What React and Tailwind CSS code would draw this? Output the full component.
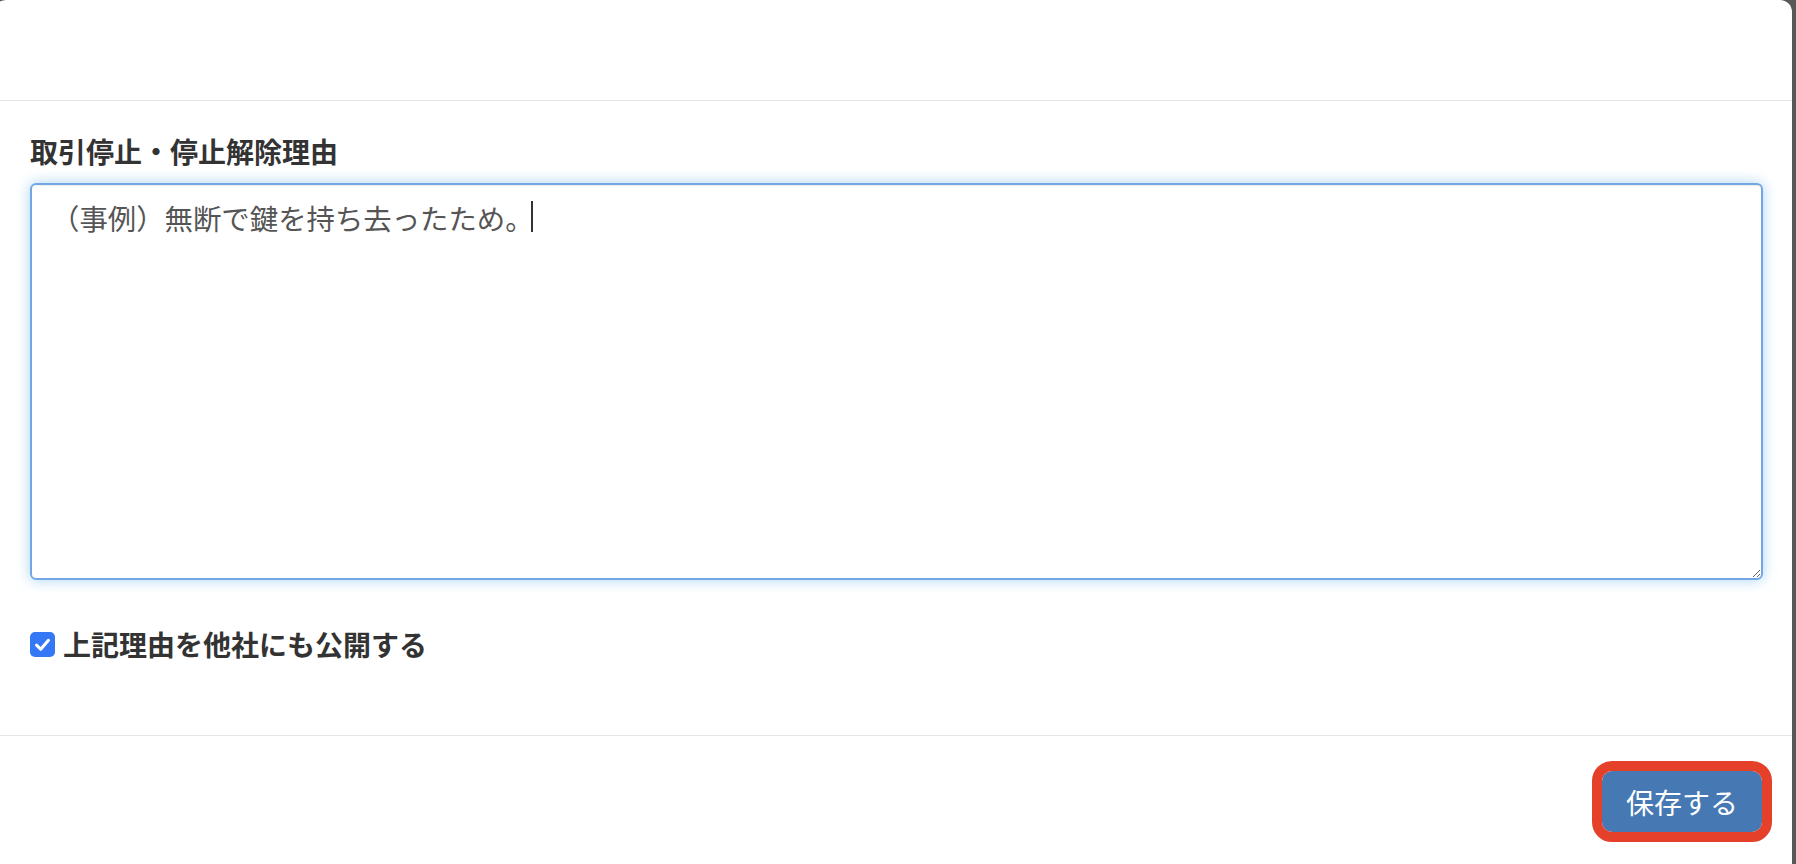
import React from 'react';

const font = { fontFamily: '"Noto Sans CJK JP", "Noto Sans", sans-serif' };

export default function App() {
    return (
        <div className="h-[864px] overflow-hidden bg-[#585858]" style={font}>
            {/* Modal */}
            <div className="-ml-[6px] w-[1798px] h-[864px] bg-white rounded-t-[12px] flex flex-col">
                {/* Header */}
                <div className="h-[101px] shrink-0 border-b border-[#e5e5e5]" />

                {/* Body */}
                <div className="pl-[36px] pr-[29px] pt-[31px] pb-[71px] border-b border-[#e5e5e5]">
                    <label className="block text-[28px] leading-[39px] font-bold text-[#333]">
                        取引停止・停止解除理由
                    </label>
                    <div className="relative mt-[12px]">
                        <textarea
                            className="block w-full h-[397px] rounded-[6px] border-2 border-[#72a7e6] pl-[19px] pr-[17px] py-[13px] text-[28.4px] leading-[39px] text-[#555] outline-none shadow-[inset_0_1px_1px_rgba(0,0,0,0.075),0_0_14px_rgba(102,175,233,0.55)]"
                            defaultValue="（事例）無断で鍵を持ち去ったため。"
                            style={font}
                        />
                        {/* text caret */}
                        <span className="absolute left-[501px] top-[18px] w-[2px] h-[31px] bg-[#333]" />
                    </div>
                    <div className="mt-[45px] flex items-center gap-[8px]">
                        <span className="w-[25px] h-[25px] rounded-[5px] bg-[#3478f6] flex items-center justify-center">
                            <svg viewBox="0 0 16 16" className="w-[19px] h-[19px]">
                                <path d="M3 8.5 L6.5 12 L13 4.5" fill="none" stroke="white" strokeWidth="2.6" strokeLinecap="round" strokeLinejoin="round" />
                            </svg>
                        </span>
                        <span className="text-[28px] leading-[39px] font-bold text-[#333]">
                            上記理由を他社にも公開する
                        </span>
                    </div>
                </div>

                {/* Footer */}
                <div className="flex justify-end pr-[30px] pt-[35px]">
                    <button className="w-[160px] h-[61px] rounded-[10px] bg-[#4679b3] text-white text-[28px] leading-none outline-[10px] outline-solid outline-[#e5402a]">
                        保存する
                    </button>
                </div>
            </div>
        </div>
    );
}
